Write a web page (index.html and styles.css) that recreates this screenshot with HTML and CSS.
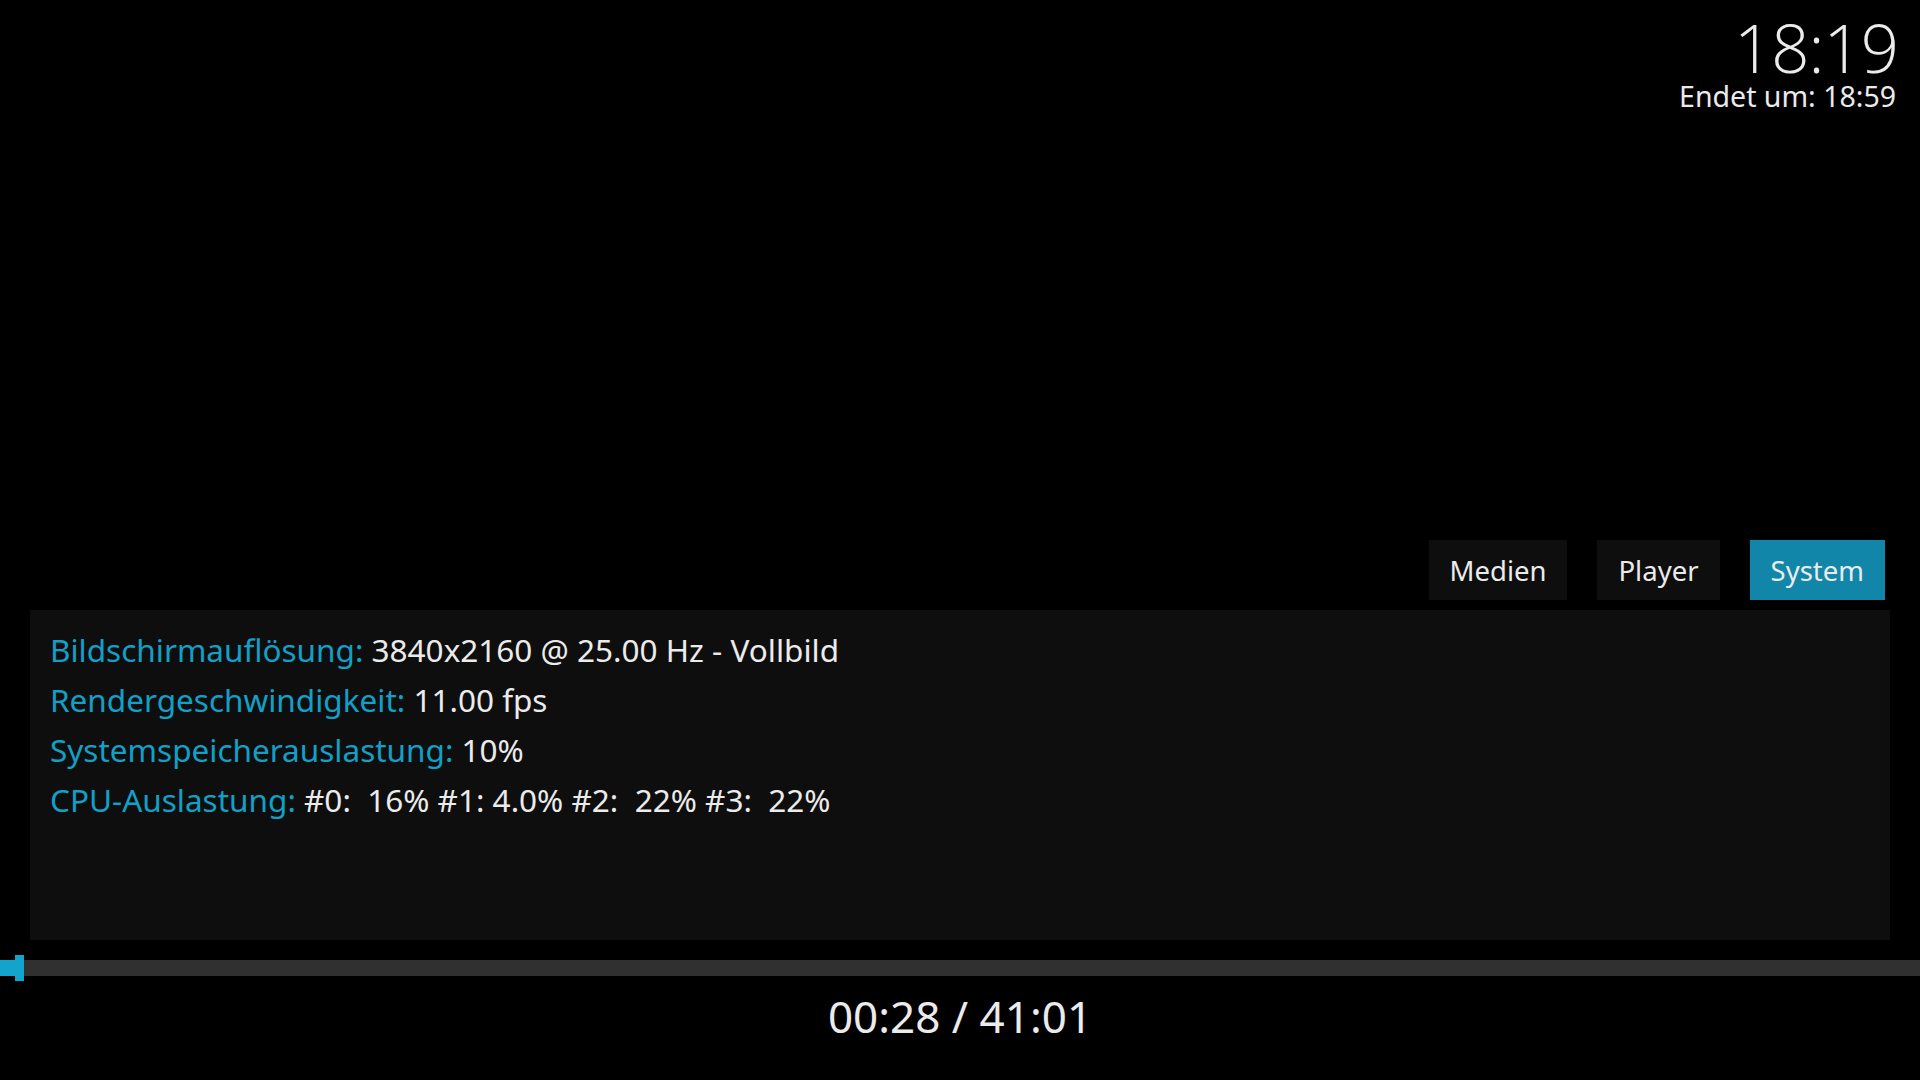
FILE: index.html
```html
<!DOCTYPE html>
<html>
<head>
  <meta charset="UTF-8">
  <title>Player OSD</title>
  <link rel="stylesheet" href="styles.css">
</head>
<body>
  <div class="screen">
    <!-- Clock in the top right corner -->
    <div class="top">
      <div class="clock">18:19</div>
      <div class="ends">Endet um: 18:59</div>
    </div>

    <div class="osd">
      <div class="tabs">
        <div class="tab">Medien</div>
        <div class="tab">Player</div>
        <div class="tab active">System</div>
      </div>

      <div class="info">
        <p><span class="label">Bildschirmauflösung:</span> 3840x2160 @ 25.00 Hz - Vollbild</p>
        <p><span class="label">Rendergeschwindigkeit:</span> 11.00 fps</p>
        <p><span class="label">Systemspeicherauslastung:</span> 10%</p>
        <p><span class="label">CPU-Auslastung:</span> #0:  16% #1: 4.0% #2:  22% #3:  22%</p>
      </div>

      <div class="progress">
        <div class="track">
          <div class="fill" style="width: 15px;"></div>
        </div>
        <div class="knob" style="left: 15px;"></div>
      </div>

      <div class="time">00:28 / 41:01</div>
    </div>
  </div>
</body>
</html>
```

FILE: styles.css
```css
/* Reset */
body, html {
  margin: 0;
  padding: 0;
  background-color: #000;
  color: #ebebeb;
  font-family: "Noto Sans", "Open Sans", sans-serif;
}

.screen {
  height: 1080px;
  display: flex;
  flex-direction: column;
  padding-bottom: 42px;
  box-sizing: border-box;
}

/* Clock */
.top {
  display: flex;
  flex-direction: column;
  align-items: flex-end;
  padding: 10px 22px 0 0;
}

.clock {
  font-family: "Open Sans", "Noto Sans", sans-serif;
  font-size: 67px;
  font-weight: 300;
  letter-spacing: -1px;
  line-height: 74px;
}

.ends {
  margin-right: 2px;
  font-size: 28.5px;
  line-height: 24px;
}

/* OSD area */
.osd {
  margin-top: auto;
}

.tabs {
  display: flex;
  justify-content: flex-end;
  gap: 30px;
  padding-right: 35px;
}

.tab {
  height: 60px;
  padding: 0 21px;
  display: flex;
  align-items: center;
  font-size: 27.5px;
  background-color: #0e0e0e;
}

.tab.active {
  background-color: #1286a9;
}

/* System info panel */
.info {
  margin: 10px 30px 0 30px;
  height: 330px;
  box-sizing: border-box;
  padding: 15px 20px;
  background-color: #0e0e0e;
}

.info p {
  margin: 0;
  font-size: 31.5px;
  line-height: 50px;
  white-space: pre;
}

.label {
  color: #12a0c7;
}

/* Progress bar */
.progress {
  position: relative;
  height: 21px;
  padding-top: 5px;
  margin-top: 15px;
}

.track {
  height: 16px;
  background-color: #303030;
}

.fill {
  height: 100%;
  background-color: #12a4cc;
}

.knob {
  position: absolute;
  top: 0;
  width: 9px;
  height: 26px;
  background-color: #12a4cc;
}

.time {
  margin-top: 13px;
  text-align: center;
  font-size: 44px;
  line-height: 44px;
}
```
